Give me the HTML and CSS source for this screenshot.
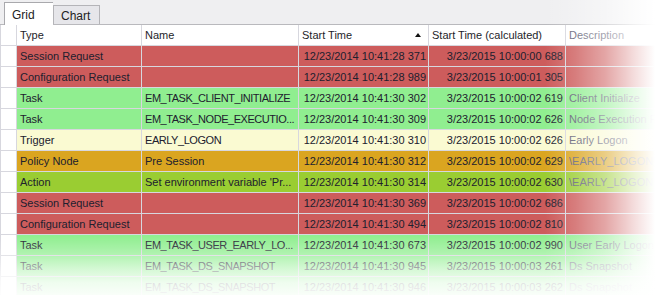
FILE: index.html
```html
<!DOCTYPE html>
<html lang="en">
<head>
    <meta charset="UTF-8">
    <title>Event Grid</title>
    <link rel="stylesheet" href="styles.css">
</head>
<body>
    <div class="page">
        <div class="tabs">
            <div class="tab active">Grid</div>
            <div class="tab">Chart</div>
        </div>

        <div class="grid">
            <div class="row head">
                <div class="cell ind"></div>
                <div class="cell">Type</div>
                <div class="cell">Name</div>
                <div class="cell sorted">Start Time <span class="arrow"></span></div>
                <div class="cell">Start Time (calculated)</div>
                <div class="cell desc">Description</div>
            </div>

            <div class="row red">
                <div class="cell ind"></div>
                <div class="cell">Session Request</div>
                <div class="cell"></div>
                <div class="cell num">12/23/2014 10:41:28 371</div>
                <div class="cell num">3/23/2015 10:00:00 688</div>
                <div class="cell desc"></div>
            </div>
            <div class="row red">
                <div class="cell ind"></div>
                <div class="cell">Configuration Request</div>
                <div class="cell"></div>
                <div class="cell num">12/23/2014 10:41:28 989</div>
                <div class="cell num">3/23/2015 10:00:01 305</div>
                <div class="cell desc"></div>
            </div>
            <div class="row green">
                <div class="cell ind"></div>
                <div class="cell">Task</div>
                <div class="cell caps">EM_TASK_CLIENT_INITIALIZE</div>
                <div class="cell num">12/23/2014 10:41:30 302</div>
                <div class="cell num">3/23/2015 10:00:02 619</div>
                <div class="cell desc">Client Initialize</div>
            </div>
            <div class="row green">
                <div class="cell ind"></div>
                <div class="cell">Task</div>
                <div class="cell caps">EM_TASK_NODE_EXECUTIO...</div>
                <div class="cell num">12/23/2014 10:41:30 309</div>
                <div class="cell num">3/23/2015 10:00:02 626</div>
                <div class="cell desc">Node Execution Rule</div>
            </div>
            <div class="row yellow">
                <div class="cell ind"></div>
                <div class="cell">Trigger</div>
                <div class="cell caps">EARLY_LOGON</div>
                <div class="cell num">12/23/2014 10:41:30 310</div>
                <div class="cell num">3/23/2015 10:00:02 626</div>
                <div class="cell desc">Early Logon</div>
            </div>
            <div class="row gold">
                <div class="cell ind"></div>
                <div class="cell">Policy Node</div>
                <div class="cell">Pre Session</div>
                <div class="cell num">12/23/2014 10:41:30 312</div>
                <div class="cell num">3/23/2015 10:00:02 629</div>
                <div class="cell desc">\EARLY_LOGON\Pre Session</div>
            </div>
            <div class="row olive">
                <div class="cell ind"></div>
                <div class="cell">Action</div>
                <div class="cell">Set environment variable 'Pr...</div>
                <div class="cell num">12/23/2014 10:41:30 314</div>
                <div class="cell num">3/23/2015 10:00:02 630</div>
                <div class="cell desc">\EARLY_LOGON\Pre Session</div>
            </div>
            <div class="row red">
                <div class="cell ind"></div>
                <div class="cell">Session Request</div>
                <div class="cell"></div>
                <div class="cell num">12/23/2014 10:41:30 369</div>
                <div class="cell num">3/23/2015 10:00:02 686</div>
                <div class="cell desc"></div>
            </div>
            <div class="row red">
                <div class="cell ind"></div>
                <div class="cell">Configuration Request</div>
                <div class="cell"></div>
                <div class="cell num">12/23/2014 10:41:30 494</div>
                <div class="cell num">3/23/2015 10:00:02 810</div>
                <div class="cell desc"></div>
            </div>
            <div class="row green">
                <div class="cell ind"></div>
                <div class="cell">Task</div>
                <div class="cell caps">EM_TASK_USER_EARLY_LO...</div>
                <div class="cell num">12/23/2014 10:41:30 673</div>
                <div class="cell num">3/23/2015 10:00:02 990</div>
                <div class="cell desc">User Early Logon</div>
            </div>
            <div class="row green">
                <div class="cell ind"></div>
                <div class="cell">Task</div>
                <div class="cell caps">EM_TASK_DS_SNAPSHOT</div>
                <div class="cell num">12/23/2014 10:41:30 945</div>
                <div class="cell num">3/23/2015 10:00:03 261</div>
                <div class="cell desc">Ds Snapshot</div>
            </div>
            <div class="row green">
                <div class="cell ind"></div>
                <div class="cell">Task</div>
                <div class="cell caps">EM_TASK_DS_SNAPSHOT</div>
                <div class="cell num">12/23/2014 10:41:30 946</div>
                <div class="cell num">3/23/2015 10:00:03 262</div>
                <div class="cell desc">Ds Snapshot</div>
            </div>
        </div>

        <!-- white fade over the right and bottom edges -->
        <div class="fade fade-right"></div>
        <div class="fade fade-bottom"></div>
    </div>
</body>
</html>
```

FILE: styles.css
```css
body {
    margin: 0;
    font-family: "Liberation Sans", Arial, sans-serif;
    font-size: 11px;
    color: #20202e;
    background: #fff;
}
.page {
    position: relative;
    width: 655px;
    height: 295px;
    overflow: hidden;
}
.tabs {
    display: flex;
    align-items: flex-end;
    height: 24px;
    padding-left: 4px;
    background: #efeff1;
    border-bottom: 1px solid #b9b9bd;
}
.tab {
    box-sizing: border-box;
    width: 47px;
    height: 19px;
    padding: 3px 0 0 7px;
    background: #e6e6ea;
    border: 1px solid #b4b4b8;
    border-bottom: none;
    font-size: 12px;
    color: #222;
}
.tab.active {
    width: 49px;
    height: 23px;
    margin-bottom: -1px;
    padding: 5px 0 0 7px;
    background: #fff;
    border-color: #a9a9ad;
    border-right: none;
}
.grid {
    display: flex;
    flex-direction: column;
    gap: 1px;
    padding-left: 1px;
    background: #d7d7de;
}
.row {
    display: grid;
    grid-template-columns: 15px 124px 156px 129px 136px 200px;
    column-gap: 1px;
    height: 20px;
    line-height: 20px;
}
.cell {
    padding: 0 3px;
    white-space: nowrap;
    overflow: hidden;
}
.cell.caps {
    letter-spacing: -0.45px;
}
.cell.ind {
    background: #fff;
    padding: 0;
}
.head .cell {
    background: #fff;
    color: #1e1e2a;
}
.sorted {
    display: flex;
    align-items: center;
}
.arrow {
    margin-left: auto;
    margin-right: 4px;
    width: 0;
    height: 0;
    border-left: 3px solid transparent;
    border-right: 3px solid transparent;
    border-bottom: 4px solid #111;
}
.num {
    text-align: right;
    padding-right: 2px;
}
.desc,
.head .desc {
    color: #5c5c72;
}
.red .cell { background: #cd5c5c; }
.green .cell { background: #90ee90; }
.yellow .cell { background: #fafad2; }
.gold .cell { background: #daa520; }
.olive .cell { background: #9acd32; }
.row .cell.ind { background: #fff; }
.fade {
    position: absolute;
    top: 0;
    left: 0;
    width: 655px;
    height: 295px;
    pointer-events: none;
}
.fade-right {
    background: linear-gradient(to right,
        rgba(255,255,255,0) 545px,
        rgba(255,255,255,0.2) 575px,
        rgba(255,255,255,0.45) 605px,
        rgba(255,255,255,0.8) 635px,
        rgba(255,255,255,1) 655px);
}
.fade-bottom {
    background: linear-gradient(to bottom,
        rgba(255,255,255,0) 236px,
        rgba(255,255,255,0.3) 255px,
        rgba(255,255,255,0.6) 268px,
        rgba(255,255,255,0.85) 282px,
        rgba(255,255,255,0.95) 295px);
}
```
